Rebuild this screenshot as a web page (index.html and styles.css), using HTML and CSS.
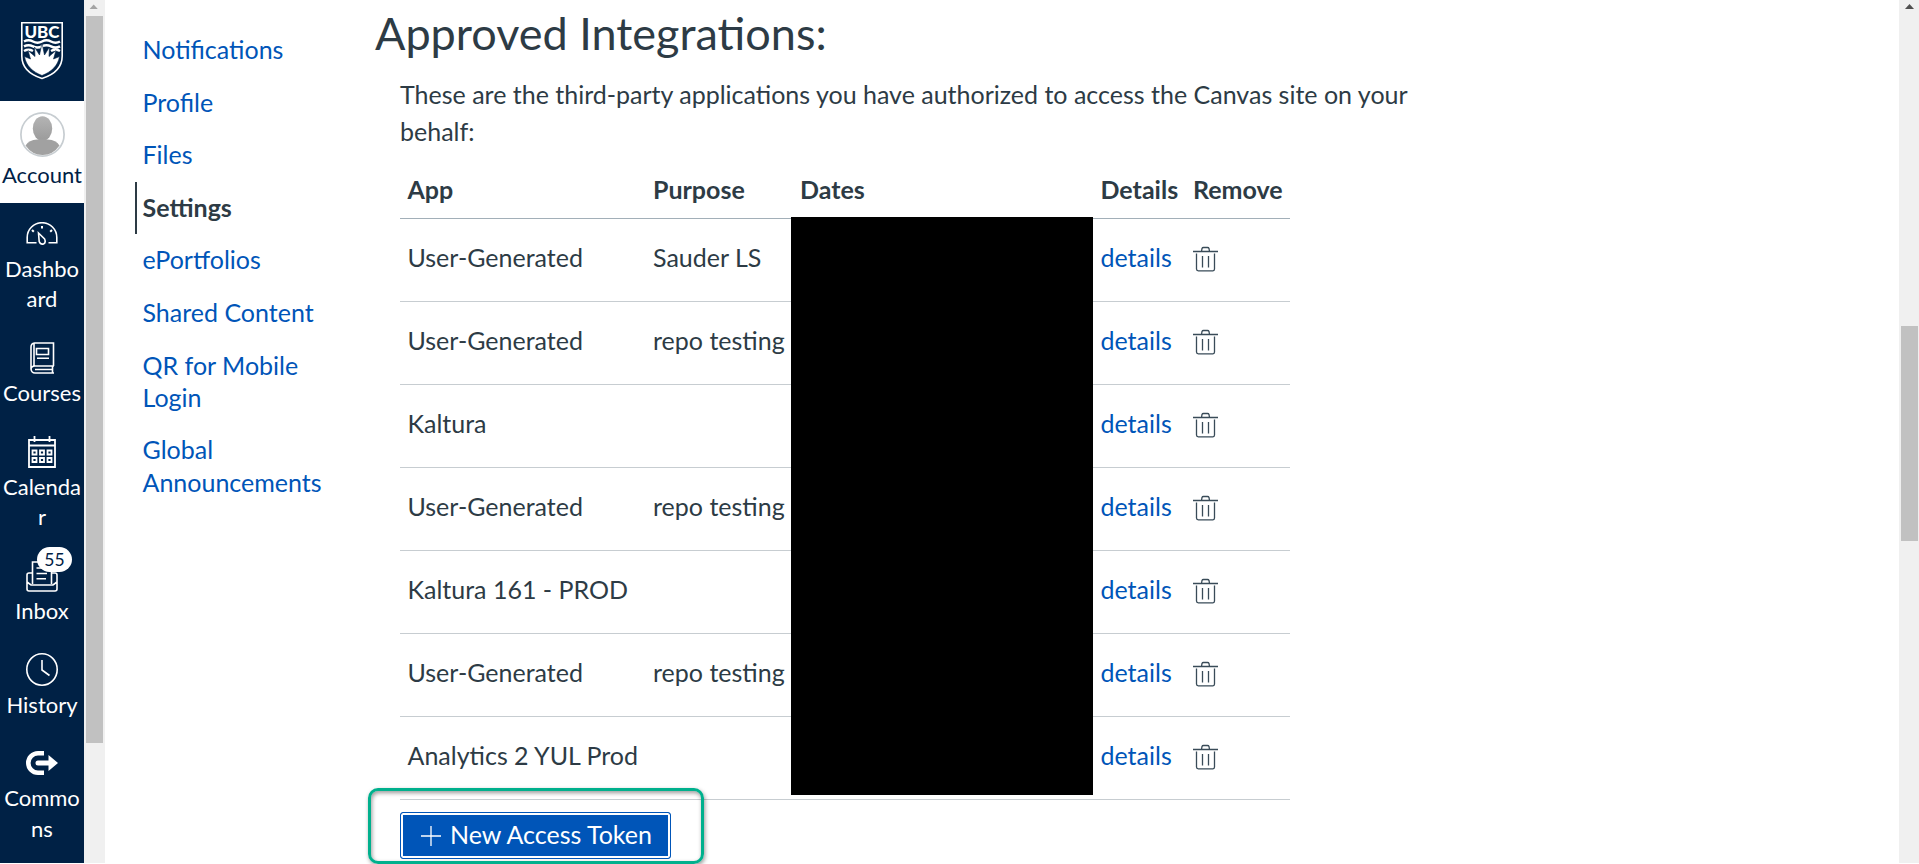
FILE: index.html
```html
<!DOCTYPE html>
<html lang="en">
<head>
<meta charset="utf-8">
<title>User Settings</title>
<link rel="stylesheet" href="styles.css">
</head>
<body>
<svg width="0" height="0" class="defs">
  <symbol id="trash" viewBox="0 0 25 26">
    <g fill="none" stroke="#394b58" stroke-width="1.3">
      <path d="M0 5.5H25M8.5 5.5L9 2.5Q9.300 1.500 10.500 1.500H14.500Q15.700 1.500 16 2.500L16.500 5.500M3.500 7.500V23Q3.500 24.800 5.300 24.800H20Q21.500 24.800 21.500 23V7.500M9.500 10V21.500M15.500 10V21.500"/>
    </g>
  </symbol>
</svg>
<div class="page">
  <nav class="rail">
    <a class="logo">
      <svg width="42" height="58" viewBox="0 0 42 58">
        <path d="M.8.8H41.200V34C41.200 46 32 53 21 56.500C10 53 .8 46 .8 34Z" fill="#002145" stroke="#fff" stroke-width="1.600"/>
        <text x="21" y="16" class="logo-text" textLength="35" lengthAdjust="spacingAndGlyphs">UBC</text>
        <g fill="none" stroke="#fff" stroke-width="2.500">
          <path d="M3 19.500Q7.500 17 12 19.500T21 19.500T30 19.500T39 19.500M3 24.300Q7.500 22 12 24.300T21 24.300T30 24.300T39 24.300M3 29Q7.500 26.500 12 29M30 29Q34.500 26.500 39 29"/>
        </g>
        <path d="M21 21L23.500 33L28.500 25L28 34.500L35 28.500L32.500 37L38.500 34.500C37 44 30 50 21 53.500C12 50 5 44 3.500 34.500L9.500 37L7 28.500L14 34.500L13.500 25L18.500 33Z" fill="#fff" stroke="#002145" stroke-width=".6"/>
      </svg>
    </a>
    <a class="item active">
      <span class="icon avatar">
        <svg width="45" height="45" viewBox="0 0 45 45">
          <defs><linearGradient id="g" x2="0" y2="1"><stop stop-color="#b4b4b4"/><stop offset="1" stop-color="#9b9b9b"/></linearGradient></defs>
          <circle cx="22.500" cy="22.500" r="21.600" fill="#fff" stroke="#c7cdd1" stroke-width="1.700"/>
          <ellipse cx="22.500" cy="16.500" rx="9.700" ry="12.300" fill="url(#g)"/>
          <path d="M5.500 33.500Q9 28 17 27.500H28Q36 28 39.500 33.500Q33 43 22.500 43T5.500 33.500Z" fill="#a1a1a1"/>
        </svg>
      </span>
      <span class="label">Account</span>
    </a>
    <a class="item">
      <span class="icon"><svg width="32" height="24" viewBox="0 0 32 24" fill="none" stroke="#fff" stroke-width="1.600">
        <path d="M10.500 20.800H1.200V15.500A14.800 14.800 0 0 1 30.800 15.500V20.800H22.500M12.500 11L13.200 19.500Q14.500 22.800 17.500 22Q20.200 20.500 18.600 17Z"/>
        <path d="M16 4V6.500M6 8L7.800 9.800M26 8L24.200 9.800" stroke-width="2"/>
      </svg></span>
      <span class="label">Dashbo<br>ard</span>
    </a>
    <a class="item">
      <span class="icon"><svg width="25" height="32" viewBox="0 0 25 32" fill="none" stroke="#fff" stroke-width="1.600">
        <path d="M23.500 24V1H4.500Q1 1.500 1 5V27Q1.500 31 5 31H24M24 24H5Q1 24 1 27.500M22.500 24V30.500M4 24V1M5 27.500H22"/>
        <path d="M6.500 6.500H18.500V12.500H6.500ZM7 16.300H19"/>
      </svg></span>
      <span class="label">Courses</span>
    </a>
    <a class="item">
      <span class="icon"><svg width="28" height="32" viewBox="0 0 28 32" fill="none" stroke="#fff" stroke-width="1.800">
        <path d="M1 4H27V31H1ZM1 9.500H27M6.500 0V6M21.500 0V6"/>
        <path d="M4.500 14.500H8.500V18.500H4.500ZM12 14.500H16V18.500H12ZM19.500 14.500H23.500V18.500H19.500ZM4.500 22H8.500V26H4.500ZM12 22H16V26H12ZM19.500 22H23.500V26H19.500Z"/>
      </svg></span>
      <span class="label">Calenda<br>r</span>
    </a>
    <a class="item">
      <span class="icon"><svg width="32" height="32" viewBox="0 0 32 32" fill="none" stroke="#fff" stroke-width="1.600">
        <path d="M6.500 24V2H25.500V24M6.500 13H3Q1 13 1 15V29Q1 31 3 31H29Q31 31 31 29V15Q31 13 29 13H25.500M1 22L5 25H27L31 22M10.500 8H21M10.500 13.500H21M10.500 18.800H20"/>
      </svg><b class="badge">55</b></span>
      <span class="label">Inbox</span>
    </a>
    <a class="item">
      <span class="icon"><svg width="32" height="33" viewBox="0 0 32 33" fill="none" stroke="#fff" stroke-width="1.600">
        <ellipse cx="16" cy="16.500" rx="15.200" ry="15.700"/><path d="M16 7V17L23.500 22.500"/>
      </svg></span>
      <span class="label">History</span>
    </a>
    <a class="item">
      <span class="icon"><svg width="32" height="24" viewBox="0 0 32 24">
        <path d="M18 2.300H12A9.700 9.700 0 0 0 12 21.700H18" fill="none" stroke="#fff" stroke-width="4.600"/>
        <path d="M12 9.500H22.500V4L32 12L22.500 20V14.500H12A2.500 2.500 0 0 1 12 9.500Z" fill="#fff"/>
      </svg></span>
      <span class="label">Commo<br>ns</span>
    </a>
  </nav>
  <div class="scrollbar rail-scroll">
    <svg width="21" height="16" viewBox="0 0 21 16"><path d="M4 9L8.500 4L13 9Z" fill="#a3a3a3"/></svg>
    <div class="thumb"></div>
  </div>
  <nav class="menu">
    <a>Notifications</a>
    <a>Profile</a>
    <a>Files</a>
    <a class="current">Settings</a>
    <a>ePortfolios</a>
    <a>Shared Content</a>
    <a>QR for Mobile Login</a>
    <a>Global Announcements</a>
  </nav>
  <main class="content">
    <h2>Approved Integrations:</h2>
    <p>These are the third-party applications you have authorized to access the Canvas site on your behalf:</p>
    <div class="table">
      <div class="row head"><span>App</span><span>Purpose</span><span>Dates</span><span>Details</span><span>Remove</span></div>
      <div class="row"><span>User-Generated</span><span>Sauder LS</span><span></span><a>details</a><svg class="trash"><use href="#trash"/></svg></div>
      <div class="row"><span>User-Generated</span><span>repo testing</span><span></span><a>details</a><svg class="trash"><use href="#trash"/></svg></div>
      <div class="row"><span>Kaltura</span><span></span><span></span><a>details</a><svg class="trash"><use href="#trash"/></svg></div>
      <div class="row"><span>User-Generated</span><span>repo testing</span><span></span><a>details</a><svg class="trash"><use href="#trash"/></svg></div>
      <div class="row"><span>Kaltura 161 - PROD</span><span></span><span></span><a>details</a><svg class="trash"><use href="#trash"/></svg></div>
      <div class="row"><span>User-Generated</span><span>repo testing</span><span></span><a>details</a><svg class="trash"><use href="#trash"/></svg></div>
      <div class="row"><span>Analytics 2 YUL Prod</span><span></span><span></span><a>details</a><svg class="trash"><use href="#trash"/></svg></div>
      <div class="redaction"></div>
    </div>
    <div class="actions">
      <button class="token"><svg width="20" height="20" viewBox="0 0 20 20"><path d="M10 0V20M0 10H20" stroke="#fff" stroke-width="1.300"/></svg><span>New Access Token</span></button>
      <div class="highlight"></div>
    </div>
  </main>
  <div class="scrollbar page-scroll">
    <svg width="20" height="16" viewBox="0 0 20 16"><path d="M6 9L10.500 4L15 9Z" fill="#505050"/></svg>
    <div class="thumb"></div>
  </div>
</div>
</body>
</html>
```
FILE: styles.css
```css
* { box-sizing: border-box; }
body {
  margin: 0;
  overflow: hidden;
  background: #fff;
  color: #2d3b45;
  font-family: Lato, "Liberation Sans", sans-serif;
  font-size: 25px;
}
.defs { position: absolute; }
.page { display: flex; height: 864px; overflow: hidden; }

.rail { width: 84px; height: 863px; background: #002145; flex: none; color: #fff; }
.logo { display: block; height: 101px; padding: 22px 0 0 21px; }
.logo svg { display: block; }
.logo-text { fill: #fff; font-size: 17px; font-weight: 900; text-anchor: middle; }
.item { display: flex; flex-direction: column; align-items: center; padding: 13.500px 0 12.800px; }
.icon { display: flex; position: relative; height: 34px; align-items: center; justify-content: center; }
.label { margin-top: 3px; font-size: 22px; line-height: 30.500px; text-align: center; white-space: nowrap; }
.active { background: #fff; color: #002145; height: 102px; padding-top: 11px; }
.avatar { height: 45px; }
.active .label { margin-top: 3px; }
.badge {
  position: absolute; left: 11px; top: -12px;
  width: 35px; height: 25px; border-radius: 13px;
  background: #fff; color: #002145;
  font-size: 17.500px; font-weight: 400; line-height: 25px; text-align: center;
}

.scrollbar { background: #f0f0f0; flex: none; height: 863px; }
.scrollbar svg { display: block; }
.thumb { background: #c1c1c1; width: 17px; margin-left: 2px; }
.rail-scroll { width: 21px; }
.rail-scroll svg { margin-left: 2px; width: 19px; }
.rail-scroll .thumb { height: 727px; }
.page-scroll { width: 20px; margin-left: auto; }
.page-scroll .thumb { height: 215px; margin-top: 310px; }

.menu { width: 205px; margin: 24px 0 0 30px; flex: none; }
.menu a { display: block; padding: 9px 0 11.300px 7.500px; line-height: 32.300px; color: #0055b8; }
.menu .current { color: #2d3b45; font-weight: 700; border-left: 2px solid #2d3b45; padding-left: 5.500px; }

.content { width: 1060px; padding: 0 0 0 35px; flex: none; }
h2 { margin: 0; padding-top: 2px; font-size: 45px; line-height: 62px; font-weight: 400; }
p { width: 1020px; margin: 12px 0 0 25px; line-height: 37px; }
.table { position: relative; width: 890px; margin: 19px 0 0 25px; }
.row {
  display: grid; grid-template-columns: 245.500px 147px 300.500px 92.500px 1fr;
  align-items: center; height: 83px; padding: 0 0 7px 7.500px;
  border-bottom: 1px solid #c7cdd1;
}
.row a { color: #0055b8; }
.head { height: 50px; padding-bottom: 10px; font-weight: 700; border-color: #a2afb8; }
.trash { width: 25px; height: 26px; margin-top: 4px; }
.redaction { position: absolute; left: 391px; top: 48px; width: 302px; height: 578px; background: #000; }
.actions { position: relative; padding: 12px 0 0 25px; }
.token {
  display: flex; align-items: center; gap: 9px;
  width: 271px; height: 47px; padding: 0 0 0 20px;
  border: 1px solid #0055b8; border-radius: 3px;
  background: #0055b8; box-shadow: inset 0 0 0 2px #fff;
  color: #fff; font: inherit; white-space: nowrap;
}
.token span { padding-bottom: 4px; }
.highlight {
  position: absolute; left: -7px; top: -12px; width: 336px; height: 76px;
  border: 3px solid #00b08d; border-radius: 10px;
  box-shadow: 1px 2px 4px rgba(0,0,0,.4), inset 1px 2px 4px rgba(0,0,0,.4);
}
```
